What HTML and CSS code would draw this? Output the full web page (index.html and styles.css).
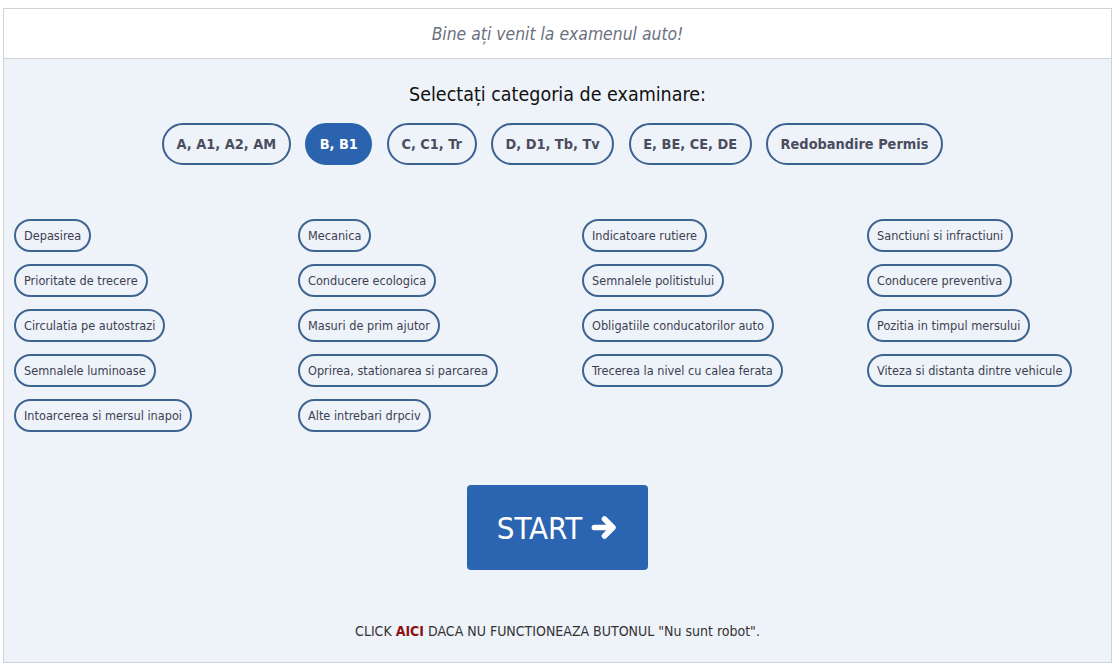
FILE: index.html
```html
<!DOCTYPE html>
<html lang="ro">
<head>
    <meta charset="UTF-8">
    <meta name="viewport" content="width=device-width, initial-scale=1.0">
    <title>Examen auto</title>
    <link rel="stylesheet" href="styles.css">
</head>
<body>
    <div class="wrap">
        <div class="header">Bine ați venit la examenul auto!</div>

        <div class="content">
            <div class="title">Selectați categoria de examinare:</div>

            <div class="categories">
                <a href="#" class="cat">A, A1, A2, AM</a>
                <a href="#" class="cat active">B, B1</a>
                <a href="#" class="cat">C, C1, Tr</a>
                <a href="#" class="cat">D, D1, Tb, Tv</a>
                <a href="#" class="cat">E, BE, CE, DE</a>
                <a href="#" class="cat">Redobandire Permis</a>
            </div>

            <div class="topics">
                <div class="topic-col">
                    <a href="#" class="topic">Depasirea</a>
                    <a href="#" class="topic">Prioritate de trecere</a>
                    <a href="#" class="topic">Circulatia pe autostrazi</a>
                    <a href="#" class="topic">Semnalele luminoase</a>
                    <a href="#" class="topic">Intoarcerea si mersul inapoi</a>
                </div>
                <div class="topic-col">
                    <a href="#" class="topic">Mecanica</a>
                    <a href="#" class="topic">Conducere ecologica</a>
                    <a href="#" class="topic">Masuri de prim ajutor</a>
                    <a href="#" class="topic">Oprirea, stationarea si parcarea</a>
                    <a href="#" class="topic">Alte intrebari drpciv</a>
                </div>
                <div class="topic-col">
                    <a href="#" class="topic">Indicatoare rutiere</a>
                    <a href="#" class="topic">Semnalele politistului</a>
                    <a href="#" class="topic">Obligatiile conducatorilor auto</a>
                    <a href="#" class="topic">Trecerea la nivel cu calea ferata</a>
                </div>
                <div class="topic-col">
                    <a href="#" class="topic">Sanctiuni si infractiuni</a>
                    <a href="#" class="topic">Conducere preventiva</a>
                    <a href="#" class="topic">Pozitia in timpul mersului</a>
                    <a href="#" class="topic">Viteza si distanta dintre vehicule</a>
                </div>
            </div>

            <div class="start-row">
                <button class="start">START
                    <svg class="arrow" viewBox="0 0 24 24" width="27" height="27">
                        <path d="M3 12 H19 M12 4.5 L19.5 12 L12 19.5" fill="none" stroke="#fff" stroke-width="5" stroke-linecap="round" stroke-linejoin="round"/>
                    </svg>
                </button>
            </div>

            <div class="note">CLICK <a href="#">AICI</a> DACA NU FUNCTIONEAZA BUTONUL "Nu sunt robot".</div>
        </div>
    </div>
</body>
</html>
```

FILE: styles.css
```css
body {
    margin: 0;
    padding: 0;
    background-color: #fff;
    font-family: "DejaVu Sans Condensed", "DejaVu Sans", sans-serif;
    color: #333;
}

.wrap {
    width: 1107px;
    height: 653px;
    margin: 8px 0 0 3px;
    border: 1px solid #cfd2d8;
    background-color: #eef2f9;
    display: flex;
    flex-direction: column;
}

.header {
    height: 49px;
    line-height: 50px;
    background-color: #fff;
    border-bottom: 1px solid #cfd3dc;
    text-align: center;
    font-style: italic;
    font-size: 17.4px;
    color: #6b7080;
}

.content {
    flex: 1;
    display: flex;
    flex-direction: column;
    align-items: center;
}

.title {
    margin-top: 24px;
    font-size: 19.5px;
    color: #111;
    line-height: 24px;
}

.categories {
    display: flex;
    gap: 14.4px;
    margin-top: 16px;
    margin-right: 10px;
}

.cat {
    display: inline-block;
    height: 38px;
    line-height: 38px;
    padding: 0 12.6px;
    border: 2px solid #3b6190;
    border-radius: 21px;
    text-decoration: none;
    font-weight: bold;
    font-size: 14.4px;
    color: #4a4d5e;
}

.cat.active {
    background-color: #2b63ae;
    border-color: #2b63ae;
    color: #fff;
}

.topics {
    align-self: stretch;
    display: grid;
    grid-template-columns: 284px 284px 285px 1fr;
    margin-top: 54px;
    padding-left: 10px;
}

.topic-col {
    display: flex;
    flex-direction: column;
    align-items: flex-start;
    gap: 12px;
}

.topic {
    display: inline-block;
    height: 29px;
    line-height: 29px;
    padding: 0 8px;
    border: 2px solid #3e6491;
    border-radius: 17px;
    text-decoration: none;
    font-size: 12.6px;
    color: #3c3f52;
}

.start-row {
    margin-top: 53px;
}

.start {
    width: 181px;
    height: 85px;
    border: none;
    border-radius: 4px;
    background-color: #2b64b0;
    color: #fff;
    font-family: "DejaVu Sans Condensed", "DejaVu Sans", sans-serif;
    font-size: 31px;
    display: flex;
    align-items: center;
    justify-content: center;
    gap: 9px;
    padding: 0;
}

.arrow {
    display: block;
}

.note {
    margin-top: 53px;
    font-size: 14px;
    color: #333;
}

.note a {
    color: #8b1313;
    font-weight: bold;
    text-decoration: none;
}
```
